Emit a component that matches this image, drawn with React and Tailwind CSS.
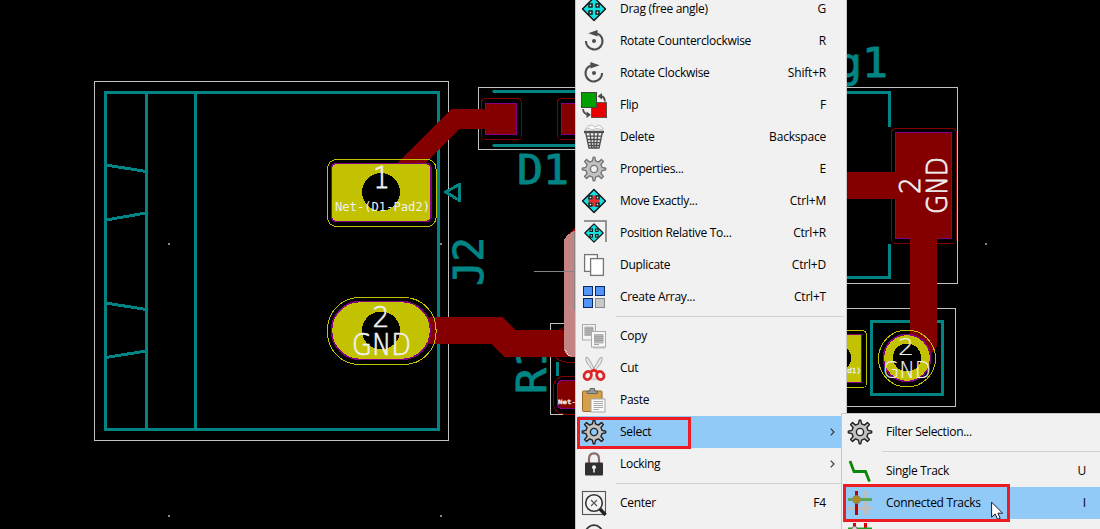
import React from "react";

const TEAL = "#008484";
const RED = "#840000";
const YEL = "#c2c200";
const PUR = "#840084";

/* ---------- board canvas ---------- */

function Label({ x, y, w, size, fill = "#f0f0f0", bold = 0, rot = 0, mono = false, children }) {
  return (
    <text
      transform={`translate(${x} ${y}) rotate(${rot})`}
      textLength={w}
      lengthAdjust="spacingAndGlyphs"
      fontFamily={mono ? "'DejaVu Sans Mono', monospace" : "'DejaVu Sans', sans-serif"}
      fontWeight={mono ? 400 : 200}
      fontSize={size}
      fill={fill}
      stroke={bold ? fill : "none"}
      strokeWidth={bold}
      strokeLinejoin="round"
    >
      {children}
    </text>
  );
}

function Board() {
  return (
    <svg className="absolute inset-0" width="1100" height="529" viewBox="0 0 1100 529" fill="none">
      <g shapeRendering="crispEdges">
        <g fill="#848484">
          <rect x="168" y="243" width="2" height="2" />
          <rect x="440" y="243" width="2" height="2" />
          <rect x="985" y="243" width="2" height="2" />
          <rect x="168" y="515" width="2" height="2" />
          <rect x="440" y="515" width="2" height="2" />
        </g>
        <g stroke="#c2c2c2">
          <rect x="94.5" y="81.5" width="354" height="359" />
          <rect x="478.5" y="87.5" width="200" height="62" />
          <rect x="550.5" y="323.5" width="100" height="91" />
          <rect x="757.5" y="87.5" width="200" height="196" />
          <rect x="755.5" y="308.5" width="200" height="98" />
        </g>
        <g stroke={TEAL} strokeWidth="3">
          <rect x="105.5" y="92.5" width="333" height="337" />
          <path d="M146.5 92V430M195.5 92V430" />
          <path d="M106 165L146 171.5M106 220L146 213M106 303L146 309.5M106 357.5L146 351" />
          <path d="M494 91.5H600M494 145.5H600" strokeLinecap="round" />
          <path d="M445.5 192L459.5 184.5V200.5Z" strokeLinejoin="round" />
          <path d="M557.5 362V376" />
          <path d="M840 92.5H889.5V127M840 277.5H889.5V244" />
          <rect x="871.5" y="321.5" width="71" height="73" />
        </g>
      </g>

      <Label x={517} y={184} w={52} size={41} fill={TEAL} bold={0.9} mono>D1</Label>
      <Label x={482.5} y={286} w={49} size={41} fill={TEAL} bold={0.9} rot={-90} mono>J2</Label>
      <Label x={546} y={394} w={52} size={41} fill={TEAL} bold={0.9} rot={-90} mono>R1</Label>
      <Label x={836} y={76.5} w={52} size={41} fill={TEAL} bold={0.9} mono>g1</Label>

      <g shapeRendering="crispEdges">
        <g stroke={RED} strokeLinejoin="miter">
          <path d="M404 171L455.5 119H500" strokeWidth="20" />
          <path d="M400 330.5H497L510 343.5H580" strokeWidth="27" />
          <path d="M840 185.5H900" strokeWidth="27" />
        </g>
        <path d="M910 230H937V346L931 354L910 340Z" fill={RED} />
        <g stroke={RED}>
          <rect x="481.5" y="98.5" width="40" height="41" rx="4" />
          <rect x="557.5" y="98.5" width="40" height="41" rx="4" />
          <rect x="891.5" y="128.5" width="65" height="115" rx="4" />
          <rect x="553.5" y="376.5" width="50" height="37.5" rx="10" />
          <path d="M575 325Q559 327 556 334M556 357Q558 362 575 363" />
        </g>
        <g fill={RED} stroke={PUR}>
          <rect x="485.5" y="103.5" width="31" height="31" />
          <rect x="561.5" y="103.5" width="31" height="31" />
          <rect x="895.5" y="132.5" width="56" height="106" />
          <rect x="557.5" y="380.5" width="50" height="28" rx="5" strokeWidth="1.5" />
        </g>
        <path d="M480 109H488V129H480ZM890 172H900V199H890ZM910 230H937V244H910Z" fill={RED} />
        <path d="M564 243Q566 237 575 227V250Z" fill={RED} />
        <path d="M563.5 243Q564 235 576 230V357H571Q564 354 563.5 347Z" fill="#c48484" />
        <path d="M565.5 350Q567 355 571 356.5" stroke="#e0e0e0" strokeDasharray="2 1" />
        <path d="M534 271.5H575M574.5 232V310" stroke="#848484" />

        <g fill={YEL} stroke={PUR} strokeWidth="1.5">
          <rect x="331.5" y="163.5" width="99.5" height="58" rx="5" />
          <rect x="331.5" y="301.5" width="99" height="58" rx="29" />
          <rect x="820.5" y="334.5" width="41" height="48" />
          <circle cx="907" cy="358" r="23.5" />
        </g>
        <g stroke={YEL}>
          <rect x="327.5" y="159.5" width="108.5" height="67" rx="9" />
          <rect x="327.5" y="297.5" width="108.5" height="67" rx="32" />
          <rect x="816.5" y="330.5" width="50" height="57" rx="4" />
          <circle cx="907" cy="358.5" r="28.5" />
        </g>
        <g fill="#000">
          <circle cx="381" cy="192" r="19" />
          <circle cx="381" cy="330.5" r="19" />
          <circle cx="907" cy="357.5" r="14" />
          <circle cx="837" cy="358" r="14" />
        </g>
      </g>

      <Label x={373} y={188} w={17} size={30} bold={0.8}>1</Label>
      <Label x={335} y={211} w={95} size={12.5} mono>Net-(D1-Pad2)</Label>
      <Label x={372.5} y={327} w={17} size={29} bold={0.7}>2</Label>
      <Label x={352} y={355} w={59} size={30} bold={0.7}>GND</Label>
      <Label x={898} y={355} w={16} size={23} bold={0.2}>2</Label>
      <Label x={883} y={378} w={48} size={23} bold={0.2}>GND</Label>
      <Label x={920} y={194} w={17} size={29} bold={0.8} rot={-90}>2</Label>
      <Label x={947} y={214} w={57} size={29} bold={0.8} rot={-90}>GND</Label>
      <Label x={558} y={404} w={36} size={6} bold={0.4} mono>Net-(R1)</Label>
      <Label x={838} y={373} w={23} size={7} bold={0.3} mono>Pad1)</Label>
    </svg>
  );
}

/* ---------- icons ---------- */

function Svg({ children }) {
  return (
    <svg width="26" height="26" viewBox="0 0 26 26" fill="none" className="shrink-0">
      {children}
    </svg>
  );
}

function MoveGlyph({ cross }) {
  return (
    <>
      <path d="M13 1.5L24.5 13L13 24.5L1.5 13Z" fill="#14e0e0" stroke="#111" strokeWidth="1.4" strokeLinejoin="round" />
      <g fill="#eee" stroke="#111" strokeWidth="1.4">
        <rect x="8" y="8" width="3" height="3" />
        <rect x="15" y="8" width="3" height="3" />
        <rect x="8" y="15" width="3" height="3" />
        <rect x="15" y="15" width="3" height="3" />
      </g>
      {cross && <path d="M13 7.5V18.5M7.5 13H18.5" stroke="#f02c2c" strokeWidth="2.8" />}
    </>
  );
}

const Move = () => <Svg><MoveGlyph /></Svg>;
const MoveExact = () => <Svg><MoveGlyph cross /></Svg>;
const MoveRel = () => (
  <Svg>
    <path d="M3 1H25V22" stroke="#757575" strokeWidth="1.5" />
    <g transform="translate(2.6 2.6) scale(.8)"><MoveGlyph /></g>
  </Svg>
);

const RotateGlyph = () => (
  <>
    <path d="M16.2 5.4A8.3 8.3 0 1 1 4.9 13" stroke="#4d4d4d" strokeWidth="2.1" />
    <path d="M7.3 5.3L16.6 2V8.6Z" fill="#4d4d4d" />
    <circle cx="13" cy="13" r="2" fill="#4d4d4d" />
  </>
);
const Ccw = () => <Svg><RotateGlyph /></Svg>;
const Cw = () => <Svg><g transform="translate(26 0) scale(-1 1)"><RotateGlyph /></g></Svg>;

const Flip = () => (
  <Svg>
    <rect x="10.6" y="10.6" width="15" height="15" fill="#e80000" stroke="#444" strokeWidth=".8" />
    <rect x=".5" y=".5" width="15" height="15" fill="#00a000" stroke="#444" strokeWidth="1" />
    <path d="M19 4Q23.5 4 24 9.5M2 17Q2.5 22.5 8 22.5" stroke="#4d4d4d" strokeWidth="1.8" />
    <path d="M16.5 4.3L21 1V7.5ZM10 22.7L5.5 19.5V26Z" fill="#4d4d4d" />
  </Svg>
);

const Trash = () => (
  <Svg>
    <path d="M4 6L7 2L11 1L14 3L18 1L21 3L22 6L16 4.5L11 6L8 4Z" fill="#fafafa" stroke="#aaa" strokeWidth=".7" />
    <path d="M3 8H23" stroke="#4d4d4d" strokeWidth="2.4" />
    <path d="M4.8 9L8 24H18L21.2 9M5.5 12.2H20.5M6.2 15.5H19.8M6.9 18.7H19.2M7.5 21.5H18.5M9 9L10.8 24M13 9V24M17 9L15.2 24" stroke="#4d4d4d" strokeWidth="1.3" />
  </Svg>
);

const GEAR =
  "M11.4 4.9L12.2 1.3H13.8L14.6 4.9L17.5 6.1L20.4 3.6L22.4 5.6L19.9 8.5L21.1 11.4L24.7 12.2V13.8L21.1 14.6L19.9 17.5L22.4 20.4L20.4 22.4L17.5 19.9L14.6 21.1L13.8 24.7H12.2L11.4 21.1L8.5 19.9L5.6 22.4L3.6 20.4L6.1 17.5L4.9 14.6L1.3 13.8V12.2L4.9 11.4L6.1 8.5L3.6 5.6L5.6 3.6L8.5 6.1Z";

function Gear({ dark, hole = "#f0f0f0" }) {
  return (
    <Svg>
      <g fill="#c2c2c2" stroke={dark ? "#222" : "#777"} strokeWidth="1.4" strokeLinejoin="round">
        <path d={GEAR} />
        <circle cx="13" cy="13" r="3.6" fill={hole} />
      </g>
    </Svg>
  );
}
const GearLight = () => <Gear />;
const GearDark = () => <Gear dark />;
const GearActive = () => <Gear dark hole="#91c9f7" />;

const Duplicate = () => (
  <Svg>
    <rect x="3.6" y="2.6" width="12.8" height="16.8" fill="#fff" stroke="#757575" strokeWidth="1.3" />
    <rect x="9.6" y="6.6" width="12.8" height="16.8" fill="#fff" stroke="#757575" strokeWidth="1.3" />
  </Svg>
);

const ArrayIcon = () => (
  <Svg>
    <g fill="#5294f7" stroke="#082a66">
      <rect x="2.5" y="2.5" width="9" height="9" />
      <rect x="14.5" y="2.5" width="9" height="9" />
      <rect x="2.5" y="14.5" width="9" height="9" />
    </g>
    <rect x="14.5" y="14.5" width="9" height="9" fill="#c9c9c9" stroke="#888" />
  </Svg>
);

const Copy = () => (
  <Svg>
    <path d="M12 25H24" stroke="#c9c9c9" strokeWidth="1.4" />
    <rect x="1.5" y="1.5" width="13" height="15.5" fill="#f5f5f5" stroke="#aaa" />
    <rect x="3.5" y="3.5" width="9" height="9.5" fill="#b5b5b5" />
    <path d="M3.5 5.5H12.5M3.5 7.5H12.5M3.5 9.5H12.5M3.5 11.5H9" stroke="#a5a5a5" />
    <rect x="10.5" y="8.5" width="14" height="15.5" fill="#f8f8f8" stroke="#aaa" />
    <rect x="13" y="11" width="9.5" height="9.5" fill="#b5b5b5" />
    <path d="M13 13.5H22.5M13 15.5H22.5M13 17.5H22.5M13 21.5H18" stroke="#a0a0a0" />
  </Svg>
);

const Cut = () => (
  <Svg>
    <ellipse cx="13" cy="24" rx="9" ry="1.5" fill="#d5d5d5" />
    <path d="M5 2.2Q7 1.5 9 6L14 15L12 16L6 8Q4.2 4 5 2.2Z" fill="#e5e5e5" stroke="#999" strokeWidth=".8" />
    <path d="M21 2.2Q19 1.5 17 6L12 15L14 16L20 8Q21.8 4 21 2.2Z" fill="#e5e5e5" stroke="#999" strokeWidth=".8" />
    <g stroke="#dc2626" strokeWidth="2.8">
      <ellipse cx="6.7" cy="20.5" rx="3.5" ry="4.2" transform="rotate(25 6.7 20.5)" />
      <ellipse cx="19.3" cy="20.5" rx="3.5" ry="4.2" transform="rotate(-25 19.3 20.5)" />
      <path d="M8.5 17.5L13 15L17.5 17.5" />
    </g>
  </Svg>
);

const Paste = () => (
  <Svg>
    <rect x="1.5" y="4" width="19.5" height="20.5" rx="1" fill="#d5a04c" stroke="#9a6a25" />
    <path d="M6 6.5V4H9V1.5H13.5V4H16.5V6.5Z" fill="#999" stroke="#666" />
    <rect x="10" y="12" width="14" height="13" fill="#fafafa" stroke="#a5a5a5" />
    <path d="M12.5 14.5H22M12.5 16.5H22M12.5 18.5H22M12.5 20.5H22M12.5 22.5H18" stroke="#aaa" />
  </Svg>
);

const Lock = () => (
  <Svg>
    <path d="M8 12V8Q8 2.3 13 2.3Q18 2.3 18 8V12" stroke="#8b6b6b" strokeWidth="2.2" />
    <rect x="4" y="11.5" width="18" height="13" rx="1" fill="#303030" />
    <circle cx="13" cy="16.3" r="2" fill="#eee" />
    <path d="M13 17V21.5" stroke="#eee" strokeWidth="1.6" />
  </Svg>
);

const Center = () => (
  <Svg>
    <rect x="1.5" y="1.5" width="23" height="23" stroke="#555" strokeWidth="1.1" />
    <path d="M19 19L24.5 25" stroke="#222" strokeWidth="3.4" />
    <circle cx="13" cy="13" r="8.3" fill="#f4f4f4" stroke="#333" strokeWidth="1.6" />
    <path d="M10 10L16 16M16 10L10 16" stroke="#555" strokeWidth="1.1" />
  </Svg>
);

const ZoomIcon = () => (
  <Svg>
    <circle cx="13" cy="12" r="8.8" stroke="#333" strokeWidth="1.8" />
  </Svg>
);

const Track = () => (
  <Svg>
    <path d="M3 3L7 13.5H18.5L22.5 23.5" stroke="#0a860a" strokeWidth="2.8" />
  </Svg>
);

const Connected = () => (
  <Svg>
    <path d="M18.5 1V25M1 18.5H25" stroke="#bdbdbd" strokeWidth="3" />
    <path d="M9.5 1V25" stroke="#c00000" strokeWidth="3" />
    <path d="M1 9.5H25" stroke="#58a858" strokeWidth="3" />
    <circle cx="9.5" cy="9.5" r="4" fill="#a88c20" stroke="#888" strokeWidth=".8" />
  </Svg>
);

const Net = () => (
  <Svg>
    <path d="M7.5 1V25M18.5 1V25" stroke="#e00000" strokeWidth="3" />
    <path d="M1 7H25" stroke="#20a020" strokeWidth="3" />
    <circle cx="7.5" cy="7" r="2.6" fill="#ddd" stroke="#777" />
  </Svg>
);

/* ---------- menus ---------- */

const Chevron = () => (
  <svg width="5" height="8" viewBox="0 0 5 8" fill="none" className="ml-auto mr-[9px] shrink-0">
    <path d="M.7 .7L4 4L.7 7.3" stroke="#333" strokeWidth="1.1" />
  </svg>
);

function Item({ icon: Icon, label, keys, sub, active, pad = "pr-[18px]" }) {
  return (
    <div className={`flex h-8 shrink-0 items-center pl-[3px] ${active ? "bg-[#91c9f7]" : ""}`}>
      <Icon />
      <span className="ml-[13px] whitespace-pre tracking-[-0.3px]">{label}</span>
      {sub ? <Chevron /> : <span className={`ml-auto tracking-[-0.2px] ${pad}`}>{keys}</span>}
    </div>
  );
}

const Separator = () => (
  <div className="flex h-[7px] shrink-0 items-center pl-[38px]">
    <div className="h-px w-full bg-[#d2d2d2]" />
  </div>
);

const MENU = [
  [Move, "Drag (free angle)", "G"],
  [Ccw, "Rotate Counterclockwise", "R"],
  [Cw, "Rotate Clockwise", "Shift+R"],
  [Flip, "Flip", "F"],
  [Trash, "Delete", "Backspace"],
  [GearLight, "Properties...", "E"],
  [MoveExact, "Move Exactly...", "Ctrl+M"],
  [MoveRel, "Position Relative To...", "Ctrl+R"],
  [Duplicate, "Duplicate", "Ctrl+D"],
  [ArrayIcon, "Create Array...", "Ctrl+T"],
];

export default function App() {
  return (
    <div className="relative h-[529px] w-[1100px] overflow-hidden bg-black font-['Open_Sans','Noto_Sans',sans-serif] text-[12px] leading-4 text-black">
      <Board />

      <div className="absolute -top-[7px] left-[575px] flex h-[560px] w-[272px] flex-col border-x border-[#c8c8c8] bg-[#f1f1f1] px-[2px]">
        {MENU.map(([icon, label, keys]) => (
          <Item key={label} icon={icon} label={label} keys={keys} />
        ))}
        <Separator />
        <Item icon={Copy} label="Copy" />
        <Item icon={Cut} label="Cut" />
        <Item icon={Paste} label="Paste" />
        <Item icon={GearActive} label="Select" sub active />
        <Item icon={Lock} label="Locking" sub />
        <Separator />
        <Item icon={Center} label="Center" keys="F4" />
        <Item icon={ZoomIcon} label="" />
      </div>

      <div className="absolute left-[841px] top-[413px] flex h-[140px] w-[262px] flex-col border border-[#c8c8c8] bg-[#f1f1f1] px-[2px] pt-[2px]">
        <Item icon={GearDark} label="Filter Selection..." />
        <Separator />
        <Item icon={Track} label="Single Track" keys="U" pad="pr-[14px]" />
        <Item icon={Connected} label="Connected Tracks" keys="I" pad="pr-[14px]" active />
        <Item icon={Net} label="" />
      </div>

      <div className="absolute left-[577px] top-[417px] h-[32px] w-[114px] border-[3px] border-[#ed1c24]" />
      <div className="absolute left-[843px] top-[484px] h-[38px] w-[167px] border-[3px] border-[#ed1c24]" />
      <svg className="absolute left-[991px] top-[501px]" width="13" height="18" viewBox="0 0 13 18">
        <path d="M.6 1.2V16.2L4.2 13L6.6 18.3L9.2 17.2L6.9 12.2H11.6Z" fill="#fff" stroke="#1a1a30" strokeWidth="1" />
      </svg>
    </div>
  );
}
